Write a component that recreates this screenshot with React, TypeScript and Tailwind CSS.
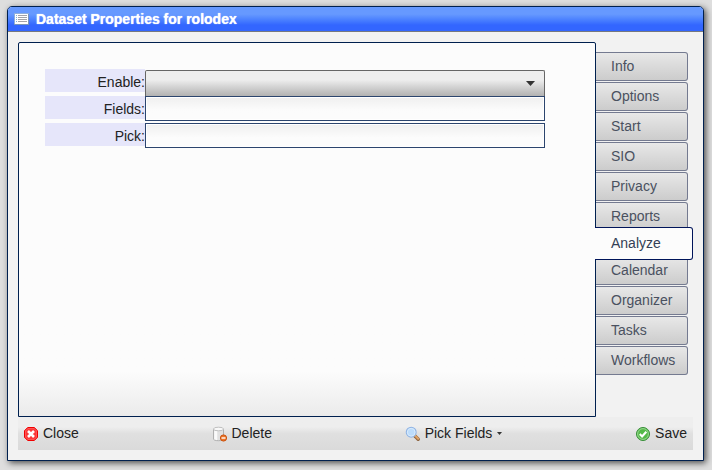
import React from 'react';

const tabs = [
  'Info', 'Options', 'Start', 'SIO', 'Privacy', 'Reports',
  'Analyze', 'Calendar', 'Organizer', 'Tasks', 'Workflows',
];

function ListIcon() {
  return (
    <svg width="16" height="16" viewBox="0 0 16 16" shapeRendering="crispEdges">
      <rect x="1" y="2" width="15" height="12" fill="#fff" stroke="none" />
      <path d="M1 2h15v1H1zM1 3h1v11H1z" fill="#8eaedb" />
      <path d="M15 3h1v11h-1zM1 13h15v1H1z" fill="#7894b8" />
      <path d="M3 4h1v1H3zM3 6h1v1H3zM3 8h1v1H3zM3 10h1v1H3z" fill="#78aee0" />
      <path d="M5 4h9v1H5zM5 6h9v1H5zM5 8h9v1H5zM5 10h9v1H5z" fill="#a3a3a8" />
    </svg>
  );
}

function CloseIcon() {
  return (
    <svg width="16" height="16" viewBox="0 0 16 16">
      <path d="M4.7 1.5h6.6l3.2 3.2v6.6l-3.2 3.2H4.7l-3.2-3.2V4.7z" fill="#fb3838" stroke="#f00000" />
      <path d="M5 2.5h6l2.5 2.5v6L11 13.5H5L2.5 11V5z" fill="none" stroke="#ff6464" strokeWidth=".6" />
      <path d="M5 5l6 6M11 5l-6 6" stroke="#fff" strokeWidth="2.6" />
    </svg>
  );
}

function DatabaseDeleteIcon() {
  return (
    <svg width="16" height="16" viewBox="0 0 16 16">
      <path d="M1.5 3v10c0 1 2.2 1.7 5 1.7s5-.7 5-1.7V3z" fill="#e1e1e1" stroke="#b0b0b0" />
      <path d="M3 5v8.5M4.5 5v9" stroke="#fafafa" strokeWidth="1.5" />
      <ellipse cx="6.5" cy="3" rx="5" ry="1.8" fill="#f8f8f8" stroke="#c0c0c0" />
      <circle cx="11.5" cy="12" r="3.1" fill="#ee7629" stroke="#c9510e" />
      <path d="M9.5 12h4" stroke="#fff" strokeWidth="1.4" />
    </svg>
  );
}

function MagnifierIcon() {
  return (
    <svg width="16" height="16" viewBox="0 0 16 16">
      <path d="M10 10l3.2 3.2" stroke="#8f6540" strokeWidth="3.5" strokeLinecap="round" />
      <path d="M10.2 9.8l3 3" stroke="#dfa264" strokeWidth="2" strokeLinecap="round" />
      <circle cx="6.2" cy="6.2" r="4.9" fill="#bcdcfb" stroke="#92b5e4" strokeWidth="1.2" />
      <circle cx="6.2" cy="6.2" r="3.9" fill="none" stroke="#e0effd" strokeWidth=".8" />
    </svg>
  );
}

function AcceptIcon() {
  return (
    <svg width="16" height="16" viewBox="0 0 16 16">
      <circle cx="8" cy="8" r="6.5" fill="#54b948" stroke="#358d36" />
      <circle cx="8" cy="8" r="5.4" fill="none" stroke="#a0d99a" strokeWidth=".9" />
      <path d="M4.8 8l2.3 2.4 4.2-4.6" fill="none" stroke="#fff" strokeWidth="2.1" />
    </svg>
  );
}

function Label({ children }: { children: React.ReactNode }) {
  return (
    <div className="h-[23px] w-[100px] bg-[#e6e6fa] pt-0.5 text-right leading-[23px]">{children}</div>
  );
}

export default function App() {
  return (
    <div className="h-[470px] w-[712px] overflow-hidden bg-[#dedede] pt-[6px] pl-[7px] font-['Liberation_Sans',Arial,sans-serif] text-[14px] text-[#222]">
      <div className="flex h-[455px] w-[697px] flex-col rounded-t-[5px] border border-[#00204f] bg-[#f2f2f2] shadow-[2px_2px_6px_rgba(0,0,0,0.65)]">
        <header className="flex h-[25px] shrink-0 items-center rounded-t-[4px] border-b border-[#747880] bg-linear-to-b from-[#6699ff] from-30% to-[#3366ff] to-75% pl-[5px]">
          <ListIcon />
          <h1 className="ml-[7px] text-[14px] leading-6 font-bold whitespace-nowrap text-white [text-shadow:0_0_1px_#fff]">
            Dataset Properties for rolodex
          </h1>
        </header>

        <div className="flex h-[385px] shrink-0 pt-[10px] pl-[10px]">
          <main className="h-[375px] w-[578px] shrink-0 rounded-t-[2px] border border-[#00204f] bg-[#fcfcfc] bg-linear-to-b from-[#fcfcfc] from-88% to-[#ebebeb] pt-[26px] pl-[26px]">
            <div className="flex h-[27px]">
              <Label>Enable:</Label>
              <div className="mt-px flex h-[26px] w-[400px] items-center justify-end rounded-t-[2px] border border-b-0 border-[#666] bg-linear-to-b from-[#eee] from-35% to-[#b2b2b2] pr-[9px]">
                <svg width="9" height="5" viewBox="0 0 9 5"><path d="M0 0h9L4.5 5z" fill="#333" /></svg>
              </div>
            </div>
            <div className="flex h-[27px]">
              <Label>Fields:</Label>
              <input aria-label="Fields" className="h-[25px] w-[400px] border border-[#2c456e] bg-linear-to-b from-[#efefef] to-[#fcfcfc] to-60% shadow-[inset_0_0_0_1px_white] outline-none" />
            </div>
            <div className="flex h-[27px]">
              <Label>Pick:</Label>
              <input aria-label="Pick" className="h-[25px] w-[400px] border border-[#2c456e] bg-linear-to-b from-[#efefef] to-[#fcfcfc] to-60% shadow-[inset_0_0_0_1px_white] outline-none" />
            </div>
          </main>

          <nav className="flex flex-col pt-[10px]">
            {tabs.map((tab) =>
              tab === 'Analyze' ? (
                <button key={tab} className="relative z-10 -mt-[5px] -mb-[4px] -ml-px h-[33px] w-[98px] shrink-0 rounded-r-[3px] border border-l-0 border-[#00145a] bg-[#fcfcfc] pl-4 text-left text-[#333f56]">
                  {tab}
                </button>
              ) : (
                <button key={tab} className="mb-px h-[29px] w-[92px] shrink-0 rounded-r-[3px] border border-l-0 border-[#747a90] bg-linear-to-b from-[#e8e8e8] to-[#cccccc] pl-[15px] text-left text-[#4a5160]">
                  {tab}
                </button>
              ),
            )}
          </nav>
        </div>

        <footer className="ml-[10px] flex h-[33px] w-[675px] items-center justify-between bg-linear-to-b from-[#eeeeee] from-30% via-[#e0e0e0] to-[#dadada] pr-[6px] pl-[5px]">
          <button className="flex items-center gap-1"><CloseIcon />Close</button>
          <button className="flex items-center gap-1"><DatabaseDeleteIcon />Delete</button>
          <button className="flex items-center gap-1">
            <MagnifierIcon />Pick Fields
            <svg className="ml-px" width="5" height="3" viewBox="0 0 5 3"><path d="M0 0h5L2.5 3z" fill="#333" /></svg>
          </button>
          <button className="flex items-center gap-1"><AcceptIcon />Save</button>
        </footer>
      </div>
    </div>
  );
}
